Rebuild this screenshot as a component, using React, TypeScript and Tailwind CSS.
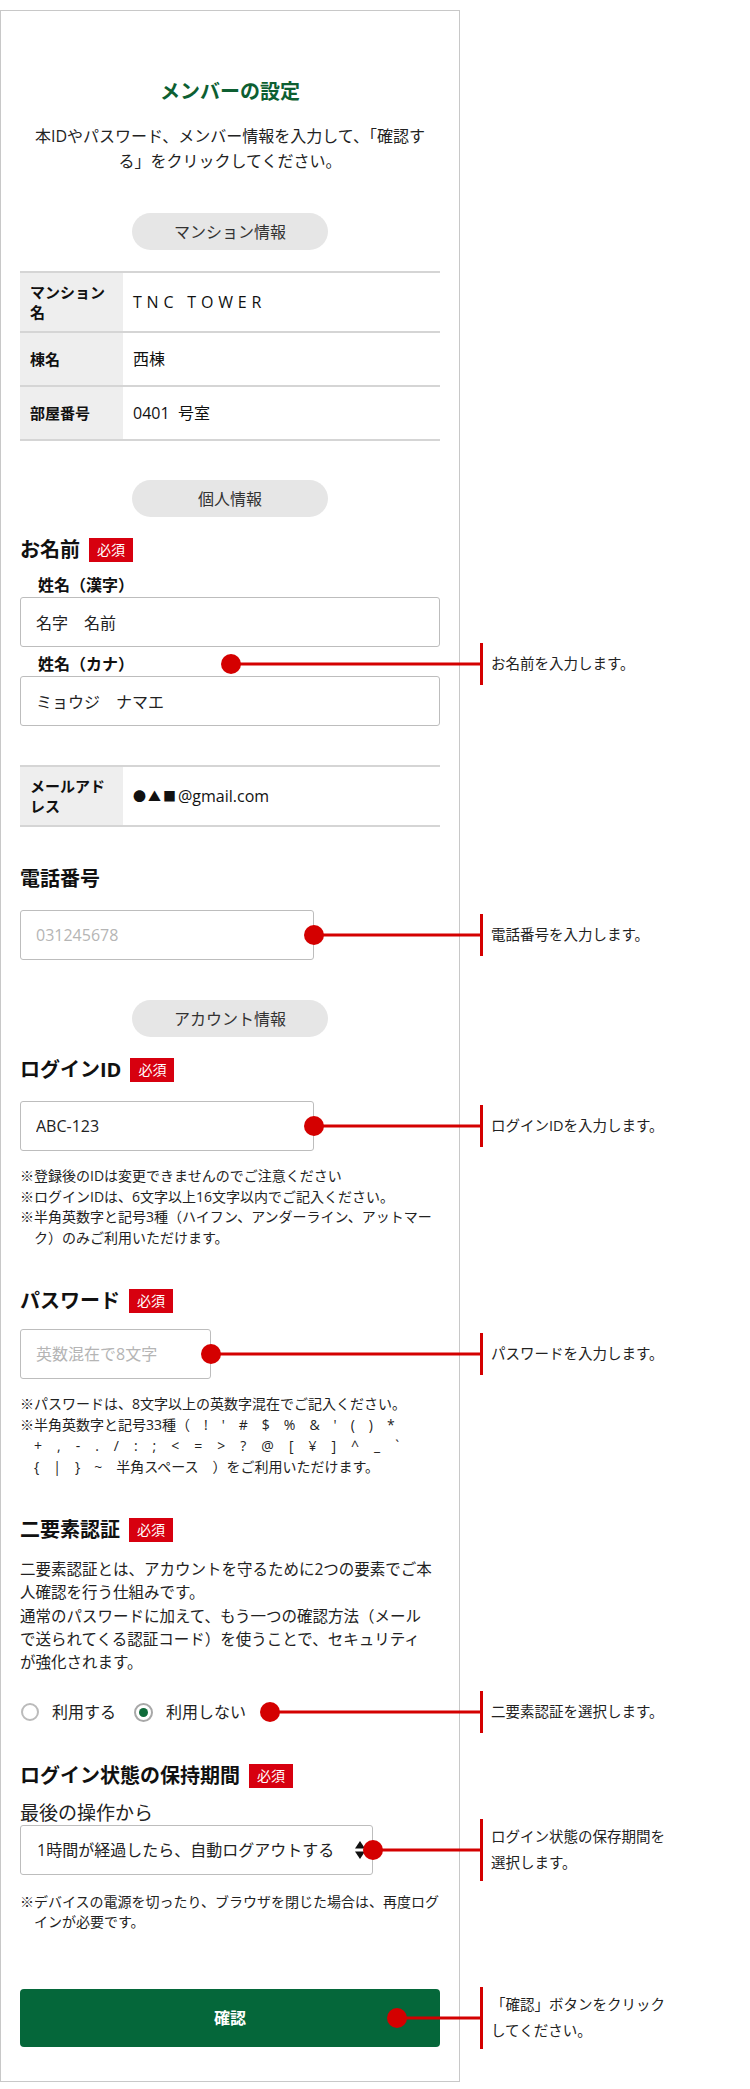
import type { ReactNode } from 'react'
import { clsx } from 'clsx'

function Badge() {
  return (
    <span className="inline-flex h-6 items-center bg-[#d7000f] px-2 text-[14px] font-normal leading-none text-white">
      必須
    </span>
  )
}

function Heading({
  children,
  required,
  className,
}: {
  children: ReactNode
  required?: boolean
  className?: string
}) {
  return (
    <div className={clsx('flex h-6 items-center gap-[9px]', className)}>
      <h2 className="text-[20px] font-bold leading-6 text-[#111]">{children}</h2>
      {required && <Badge />}
    </div>
  )
}

function Pill({ children, className }: { children: ReactNode; className?: string }) {
  return (
    <div
      className={clsx(
        'mx-auto flex h-[37px] w-[196px] items-center justify-center rounded-full bg-[#e6e6e6] text-[16px] text-[#333]',
        className
      )}
    >
      {children}
    </div>
  )
}

function Row({ label, children }: { label: string; children: ReactNode }) {
  return (
    <div className="flex border-t-2 border-[#d5d5d5]">
      <div className="flex w-[103px] shrink-0 items-center bg-[#eeeeee] px-[10px] py-[9px] text-[15px] font-bold leading-5 text-[#111]">
        {label}
      </div>
      <div className="flex items-center px-[10px] py-[14px] text-[16px] leading-6 text-[#111]">
        {children}
      </div>
    </div>
  )
}

// red dot + line + bar + caption, overlaid to the right of the panel
function Callout({
  className,
  tall,
  children,
}: {
  className: string
  tall?: boolean
  children: ReactNode
}) {
  return (
    <div
      className={clsx(
        'pointer-events-none absolute -right-[43px] top-1/2 flex -translate-y-1/2 items-center',
        className
      )}
    >
      <span className="absolute left-[10px] right-[3px] top-1/2 h-[3px] -translate-y-1/2 bg-[#d40000]" />
      <span className="relative size-5 shrink-0 rounded-full bg-[#d40000]" />
      <span className={clsx('ml-auto w-[3px] bg-[#d40000]', tall ? 'h-[62px]' : 'h-[42px]')} />
      <span className="absolute left-full top-1/2 ml-2 -translate-y-1/2 whitespace-nowrap text-[14.5px] font-normal leading-[26px] text-[#222]">
        {children}
      </span>
    </div>
  )
}

const inputCls =
  'h-[50px] rounded-[3px] border border-[#bdbdbd] bg-white pl-[15px] text-[16px] text-[#222] outline-none placeholder:text-[#b5b5b5]'

export default function App() {
  return (
    <div className="min-h-[2089px] w-[750px] bg-white pt-[10px] font-['Open_Sans','Noto_Sans_CJK_JP',sans-serif] text-[#222]">
      <div className="w-[460px] border border-[#c8c8c8] px-[19px] pb-[34px] pt-[67px]">
        {/* Title */}
        <h1 className="text-center text-[20px] font-bold leading-7 text-[#0d5f32]">
          メンバーの設定
        </h1>
        <p className="mt-[18px] whitespace-nowrap text-center text-[16px] leading-[25px]">
          本IDやパスワード、メンバー情報を入力して、「確認す
          <br />
          る」をクリックしてください。
        </p>

        {/* Mansion info */}
        <Pill className="mt-[39px]">マンション情報</Pill>
        <div className="mt-[21px] border-b-2 border-[#d5d5d5]">
          <Row label="マンション名">
            <span className="tracking-[4.8px]">TNC TOWER</span>
          </Row>
          <Row label="棟名">西棟</Row>
          <Row label="部屋番号">{'0401\u00a0\u00a0号室'}</Row>
        </div>

        {/* Personal info */}
        <Pill className="mt-[39px]">個人情報</Pill>
        <Heading required className="mt-[21px]">
          お名前
        </Heading>
        <div className="mt-[11px] pl-[18px] text-[16px] font-bold leading-6 text-[#111]">
          姓名（漢字）
        </div>
        <input className={clsx(inputCls, 'w-full')} defaultValue="名字　名前" />
        <div className="relative mt-[5px] pl-[18px] text-[16px] font-bold leading-6 text-[#111]">
          姓名（カナ）
          <Callout className="left-[201px]">お名前を入力します。</Callout>
        </div>
        <input className={clsx(inputCls, 'w-full')} defaultValue="ミョウジ　ナマエ" />

        <div className="mt-[39px] border-b-2 border-[#d5d5d5]">
          <Row label="メールアドレス">
            <span className="text-[13px] tracking-[2px]">●▲■</span>@gmail.com
          </Row>
        </div>

        <Heading className="mt-[40px]">電話番号</Heading>
        <div className="relative mt-[19px]">
          <input className={clsx(inputCls, 'w-[294px]')} placeholder="031245678" />
          <Callout className="left-[284px]">電話番号を入力します。</Callout>
        </div>

        {/* Account info */}
        <Pill className="mt-[40px]">アカウント情報</Pill>
        <Heading required className="mt-[21px]">
          ログインID
        </Heading>
        <div className="relative mt-[19px]">
          <input className={clsx(inputCls, 'w-[294px]')} defaultValue="ABC-123" />
          <Callout className="left-[284px]">ログインIDを入力します。</Callout>
        </div>
        <div className="mt-[15px] whitespace-nowrap text-[14px] leading-[20.5px]">
          <p className="pl-[1em] indent-[-1em]">※登録後のIDは変更できませんのでご注意ください</p>
          <p className="pl-[1em] indent-[-1em]">※ログインIDは、6文字以上16文字以内でご記入ください。</p>
          <p className="pl-[1em] indent-[-1em]">
            ※半角英数字と記号3種（ハイフン、アンダーライン、アットマー
            <br />
            ク）のみご利用いただけます。
          </p>
        </div>

        <Heading required className="mt-[41px]">
          パスワード
        </Heading>
        <div className="relative mt-[16px]">
          <input className={clsx(inputCls, 'w-[191px]')} placeholder="英数混在で8文字" />
          <Callout className="left-[181px]">パスワードを入力します。</Callout>
        </div>
        <div className="mt-[14px] whitespace-nowrap text-[14px] leading-[21px]">
          <p className="pl-[1em] indent-[-1em]">※パスワードは、8文字以上の英数字混在でご記入ください。</p>
          <p className="pl-[1em] indent-[-1em]">
            ※半角英数字と記号33種（　!　'　#　$　%　&amp;　'　(　)　*
            <br />
            <span className="tracking-[0.5px]">+　,　-　.　/　:　;　&lt;　=　&gt;　?　@　[　¥　]　^　_　`</span>
            <br />
            {'{　|　}　~　半角スペース　）をご利用いただけます。'}
          </p>
        </div>

        <Heading required className="mt-[41px]">
          二要素認証
        </Heading>
        <p className="mt-[16px] whitespace-nowrap text-[15.5px] leading-[23.25px]">
          二要素認証とは、アカウントを守るために2つの要素でご本
          <br />
          人確認を行う仕組みです。
          <br />
          通常のパスワードに加えて、もう一つの確認方法（メール
          <br />
          で送られてくる認証コード）を使うことで、セキュリティ
          <br />
          が強化されます。
        </p>
        <div className="relative mt-[26px] flex h-6 items-center text-[16px]">
          <span className="ml-px size-[18px] rounded-full border-2 border-[#bbbbbb] bg-white" />
          <span className="ml-[13px]">利用する</span>
          <span className="ml-[18px] flex size-[19px] items-center justify-center rounded-full border-2 border-[#a8a8a8] bg-white">
            <span className="size-[9px] rounded-full bg-[#0f6b3a]" />
          </span>
          <span className="ml-[13px]">利用しない</span>
          <Callout className="left-[240px]">二要素認証を選択します。</Callout>
        </div>

        <Heading required className="mt-[40px]">
          ログイン状態の保持期間
        </Heading>
        <div className="mt-[13px] text-[19px] leading-6">最後の操作から</div>
        <div className="relative">
          <div className="relative w-[353px]">
            <select className="h-[50px] w-full appearance-none rounded-[3px] border border-[#bdbdbd] bg-white pl-[16px] text-[16px] text-[#222] outline-none">
              <option>1時間が経過したら、自動ログアウトする</option>
            </select>
            <svg
              className="pointer-events-none absolute right-[8px] top-1/2 -translate-y-1/2"
              width="10"
              height="18"
              viewBox="0 0 10 18"
            >
              <path d="M0 7.5 L5 0 L10 7.5 Z" fill="#111" />
              <path d="M0 10.5 L5 18 L10 10.5 Z" fill="#111" />
            </svg>
          </div>
          <Callout className="left-[343px]" tall>
            ログイン状態の保存期間を
            <br />
            選択します。
          </Callout>
        </div>
        <p className="mt-[17px] whitespace-nowrap pl-[1em] indent-[-1em] text-[14px] leading-5">
          ※デバイスの電源を切ったり、ブラウザを閉じた場合は、再度ログ
          <br />
          インが必要です。
        </p>

        <div className="relative mt-[57px]">
          <button className="h-[58px] w-full rounded-[4px] bg-[#05673a] text-[16px] font-bold text-white">
            確認
          </button>
          <Callout className="left-[367px]" tall>
            「確認」ボタンをクリック
            <br />
            してください。
          </Callout>
        </div>
      </div>
    </div>
  )
}
